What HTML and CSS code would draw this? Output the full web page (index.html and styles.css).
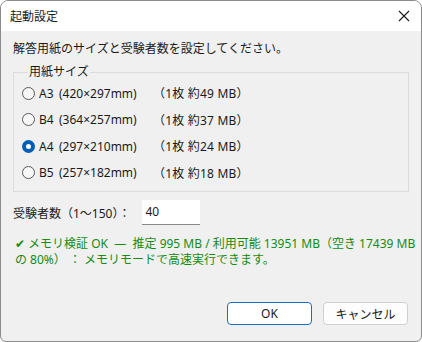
FILE: index.html
```html
<!DOCTYPE html>
<html lang="ja">
<head>
    <meta charset="UTF-8">
    <title>起動設定</title>
    <link rel="stylesheet" href="styles.css">
</head>
<body>
    <div class="window">
        <div class="titlebar">
            <span class="title">起動設定</span>
            <svg class="close" width="12" height="12" viewBox="0 0 12 12">
                <path d="M1 1 L11 11 M11 1 L1 11" stroke="#1a1a1a" stroke-width="1.1" fill="none"/>
            </svg>
        </div>
        <div class="content">
            <p class="intro">解答用紙のサイズと受験者数を設定してください。</p>
            <fieldset class="group">
                <legend>用紙サイズ</legend>
                <label class="radio"><span class="dot"></span><span class="size">A3</span><span class="dim">(420×297mm)</span><span class="mem">（1枚 約49 MB）</span></label>
                <label class="radio"><span class="dot"></span><span class="size">B4</span><span class="dim">(364×257mm)</span><span class="mem">（1枚 約37 MB）</span></label>
                <label class="radio checked"><span class="dot"></span><span class="size">A4</span><span class="dim">(297×210mm)</span><span class="mem">（1枚 約24 MB）</span></label>
                <label class="radio"><span class="dot"></span><span class="size">B5</span><span class="dim">(257×182mm)</span><span class="mem">（1枚 約18 MB）</span></label>
            </fieldset>
            <div class="count">
                <span>受験者数（1〜150）：</span>
                <div class="input">40</div>
            </div>
            <p class="status">✔ メモリ検証 OK&nbsp; —&nbsp; 推定 995 MB / 利用可能 13951 MB（空き 17439 MB の 80%）&nbsp;：&nbsp;メモリモードで高速実行できます。</p>
        </div>
        <div class="buttons">
            <button class="btn primary">OK</button>
            <button class="btn">キャンセル</button>
        </div>
    </div>
</body>
</html>
```

FILE: styles.css
```css
* {
    margin: 0;
    padding: 0;
    box-sizing: border-box;
}

body {
    font-family: "Noto Sans", "Noto Sans CJK JP", sans-serif;
    font-size: 12px;
    color: #1a1a1a;
    background: #ffffff;
}

.window {
    width: 422px;
    height: 342px;
    border: 1px solid #8c8c8c;
    border-radius: 8px 8px 6px 6px;
    background: #f0f0f0;
    display: flex;
    flex-direction: column;
    overflow: hidden;
}

.titlebar {
    height: 30px;
    background: #ffffff;
    display: flex;
    align-items: center;
    justify-content: space-between;
    padding: 0 11px 0 9px;
}

.title {
    font-size: 12px;
}

.content {
    padding: 10px 12px 0 12px;
    flex: 1;
}

.intro {
    line-height: 16px;
}

.group {
    border: 1px solid #dcdcdc;
    margin-top: 7px;
    padding: 0 0 0 8px;
    height: 128px;
}

.group legend {
    padding: 0 1px;
    margin-left: 6px;
    line-height: 16px;
}

.radio {
    display: flex;
    align-items: center;
    height: 26.5px;
}

.dot {
    width: 13px;
    height: 13px;
    border: 1px solid #5a5a5a;
    border-radius: 50%;
    margin-right: 4px;
    background: #f7f7f7;
}

.checked .dot {
    border: 4px solid #005fb8;
    background: #ffffff;
}

.size {
    width: 20px;
}

.dim {
    width: 94px;
}

.group .mem {
    letter-spacing: 0.2px;
}

.count {
    display: flex;
    align-items: center;
    margin-top: 8px;
}

.input {
    margin-left: 12px;
    width: 58px;
    height: 25px;
    background: #ffffff;
    border-bottom: 1px solid #8a8a8a;
    padding: 4px 3px;
    line-height: 16px;
}

.status {
    color: #148c14;
    margin-top: 11px;
    margin-right: -10px;
    line-height: 16px;
    padding-left: 2px;
}

.buttons {
    display: flex;
    justify-content: flex-end;
    gap: 11px;
    padding: 0 13px 16px 0;
}

.btn {
    font-family: inherit;
    font-size: 12px;
    width: 85px;
    height: 23px;
    background: #fdfdfd;
    border: 1px solid #d0d0d0;
    border-radius: 4px;
    color: #1a1a1a;
}

.btn.primary {
    border-color: #1a6fc2;
    background: #ffffff;
}
```
